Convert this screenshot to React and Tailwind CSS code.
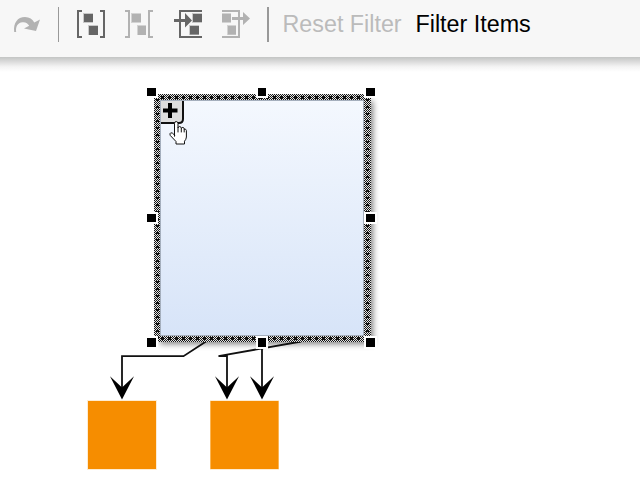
import React from "react";

const HANDLES = [
  [147, 88], [258, 88], [366, 88],
  [147, 214], [366, 214],
  [147, 338], [258, 338], [366, 338],
];

function RedoIcon() {
  return (
    <svg className="ml-3 h-8 w-8 shrink-0" viewBox="12 8 32 32" fill="#b2b2b2">
      <path d="M14.2 32C13.2 23 17.5 17 25 17C29.5 17 32.5 19.2 34.3 22.4L40 19.5L36 31L24 28.5L29.2 25.8C28 23.3 25.5 21.8 22.5 22.2C17.5 22.8 15.5 26.5 16.2 32Z" />
    </svg>
  );
}

function GroupIcon() {
  return (
    <svg className="ml-[15px] h-8 w-8 shrink-0" viewBox="74 8 32 32" shapeRendering="crispEdges">
      <path d="M82 11H78V37H82M100 11H104V37H100" fill="none" stroke="#666" strokeWidth="2" />
      <path d="M83 13h10v10h-10zM88 25h10v10h-10z" fill="#c9c9c9" />
      <path d="M84 14h9v8h-9zM89 26h9v9h-9z" fill="#666" />
    </svg>
  );
}

function UngroupIcon() {
  return (
    <svg className="ml-4 h-8 w-8 shrink-0" viewBox="122 8 32 32" shapeRendering="crispEdges">
      <path d="M125 11H129V37H125M153 11H149V37H153" fill="none" stroke="#b2b2b2" strokeWidth="2" />
      <path d="M131 13h10v10h-10zM137 25h9v10h-9z" fill="#d3d3d3" />
      <path d="M132 14h9v8h-9zM138 26h8v9h-8z" fill="#b2b2b2" />
    </svg>
  );
}

function EnterIcon() {
  return (
    <svg className="ml-4 h-8 w-8 shrink-0" viewBox="170 8 32 32">
      <path d="M202 11H180V37H202" fill="none" stroke="#666" strokeWidth="2" />
      <path d="M192 13h10v10h-10zM189 25h10v10h-10z" fill="#c9c9c9" />
      <path d="M193 14h9v8h-9zM190 26h9v8.5h-9z" fill="#666" />
      <path d="M174 19h11v-6l7 7.5l-7 7v-5.5h-11z" fill="#666" />
    </svg>
  );
}

function ExitIcon() {
  return (
    <svg className="ml-4 h-8 w-8 shrink-0" viewBox="218 8 32 32">
      <path d="M222 11H239V37H222" fill="none" stroke="#b2b2b2" strokeWidth="2" />
      <path d="M222 13h9v10h-9zM227 25h9v10h-9z" fill="#d3d3d3" />
      <path d="M222 14h9v8h-9zM228 26h8v8.5h-8z" fill="#b2b2b2" />
      <path d="M232 17h11v-5l7 6.5l-7 6.5v-5h-11z" fill="#b2b2b2" />
    </svg>
  );
}

function Toolbar() {
  return (
    <header className="flex h-[57px] items-start bg-[#f7f7f7]">
      <div className="flex h-12 items-center">
        <RedoIcon />
        <span className="ml-[14px] mt-[1px] h-[35px] w-px bg-[#999]" />
        <GroupIcon />
        <UngroupIcon />
        <EnterIcon />
        <ExitIcon />
        <span className="ml-[17px] mt-[1px] h-[35px] w-[2px] bg-[#999]" />
        <span className="ml-[13.5px] w-[133px] whitespace-nowrap text-[23.3px] leading-8 text-[#bbb]">Reset Filter</span>
        <span className="whitespace-nowrap text-[23.3px] leading-8 text-black">Filter Items</span>
      </div>
    </header>
  );
}

function Edge({ d, x }) {
  return (
    <g>
      <path d={d} fill="none" stroke="#111" strokeWidth="1.8" />
      <path d={`M${x} 399.5L${x - 12} 376.2L${x} 387.5L${x + 12} 376.2Z`} fill="#000" />
    </g>
  );
}

function Diagram() {
  return (
    <svg className="block h-[423px] w-[640px]" viewBox="0 57 640 423">
      <defs>
        <linearGradient id="toolbarShade" x1="0" y1="0" x2="0" y2="1">
          <stop offset="0" stopColor="#c3c5c4" />
          <stop offset="0.3" stopColor="#dadada" />
          <stop offset="0.65" stopColor="#f4f4f4" />
          <stop offset="1" stopColor="#fff" />
        </linearGradient>
        <linearGradient id="groupFill" x1="0" y1="0" x2="0" y2="1">
          <stop offset="0" stopColor="#f4f8fe" />
          <stop offset="1" stopColor="#d7e4f8" />
        </linearGradient>
        <filter id="groupShadow" x="-10%" y="-10%" width="120%" height="120%">
          <feGaussianBlur stdDeviation="3.2" />
        </filter>
        <pattern id="checker" width="2" height="2" patternUnits="userSpaceOnUse">
          <rect width="2" height="2" fill="#e4e4e4" />
          <path d="M0 0h1v1H0zM1 1h1v1H1z" fill="#161616" />
        </pattern>
      </defs>
      <rect x="0" y="57" width="640" height="15" fill="url(#toolbarShade)" />
      <rect x="160" y="101" width="213" height="243" fill="#000" opacity="0.5" filter="url(#groupShadow)" />
      <Edge x={122} d="M206 341.5L183.5 356.2H122V390" />
      <Edge x={227} d="M301 341.5L218.5 356.2H227V390" />
      <Edge x={262} d="M262 342V390" />
      <rect x="154" y="94" width="217" height="248" fill="url(#checker)" shapeRendering="crispEdges" />
      <path d="M157.5 99V338M367.5 99V338" stroke="#111" strokeWidth="3" strokeDasharray="2 5" shapeRendering="crispEdges" />
      <path d="M161 97.5H364M161 338.5H364" stroke="#111" strokeWidth="3" strokeDasharray="3 4" shapeRendering="crispEdges" />
      <rect x="160.5" y="100.5" width="203" height="235" fill="url(#groupFill)" stroke="#a5afbd" strokeWidth="1" />
      <path d="M161 101H183V119Q183 123 179 123H161Z" fill="#dedede" />
      <path d="M183 101V119Q183 123 179 123H161" fill="none" stroke="#111" strokeWidth="2" />
      <path d="M168 103h4v5.5h5.5v4H172v5.5h-4v-5.5h-5v-4h5z" fill="#000" />
      <rect x="87.5" y="400.5" width="69" height="69" fill="#f68d00" stroke="#fdecd3" />
      <rect x="210.5" y="400.5" width="68" height="69" fill="#f68d00" stroke="#fdecd3" />
      <path d="M210.5 401V469M278.5 401V469" stroke="#fbb655" />
      {HANDLES.map(([x, y]) => (
        <g key={`${x}-${y}`} shapeRendering="crispEdges">
          <rect x={x - 2} y={y - 2} width={x === 258 ? 12 : 13} height={y === 338 ? 13 : 12} fill="#fff" />
          <rect x={x} y={y} width={x === 258 ? 8 : 9} height={y === 338 ? 9 : 8} fill="#000" />
        </g>
      ))}
      <g stroke="#111" strokeWidth="1" strokeLinejoin="round" strokeLinecap="round">
        <path d="M174.5 136V123.5Q174.5 121.5 176.2 121.5T178 123.5V128Q178.3 126.5 179.7 126.5T181.3 128.3Q182 127.2 183.2 127.5T184.2 129.2Q185.8 128.5 186.4 130.5V137Q186.2 139.5 184.5 141.2V144H176V141.5L170.3 135.5Q169.2 133.5 170.8 132.8Q172.2 132.3 174.5 135Z" fill="#fff" />
        <path d="M178 128V132M181.3 128.5V132M184.2 129.3V132" fill="none" />
      </g>
    </svg>
  );
}

export default function App() {
  return (
    <main className="h-[480px] w-[640px] overflow-hidden bg-white font-['Liberation_Sans',Arial,sans-serif]">
      <Toolbar />
      <Diagram />
    </main>
  );
}
